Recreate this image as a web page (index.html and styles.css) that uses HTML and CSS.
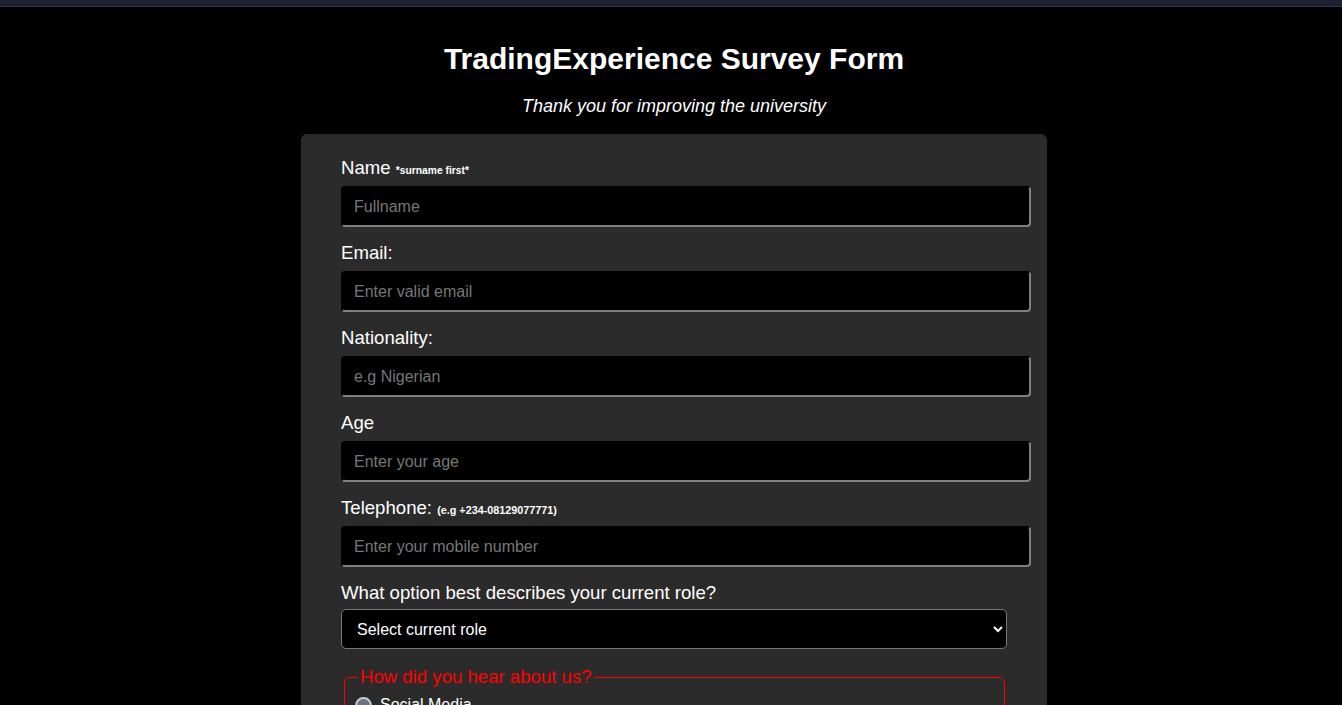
FILE: index.html
```html
<!DOCTYPE html>
<html lang="en">
<head>
<meta charset="utf-8">
<title>TradingExperience Survey Form</title>
<link rel="stylesheet" href="styles.css">
</head>
<body>
<div class="topbar"></div>
<main class="page">
  <h1 class="title">TradingExperience Survey Form</h1>
  <p class="subtitle">Thank you for improving the university</p>
  <form class="card">
    <div class="group">
      <label class="label" for="name">Name <small>*surname first*</small></label>
      <input class="field" id="name" type="text" placeholder="Fullname">
    </div>
    <div class="group">
      <label class="label" for="email">Email:</label>
      <input class="field" id="email" type="email" placeholder="Enter valid email">
    </div>
    <div class="group">
      <label class="label" for="nat">Nationality:</label>
      <input class="field" id="nat" type="text" placeholder="e.g Nigerian">
    </div>
    <div class="group">
      <label class="label" for="age">Age</label>
      <input class="field" id="age" type="number" placeholder="Enter your age">
    </div>
    <div class="group">
      <label class="label" for="tel">Telephone: <small class="small-wide">(e.g +234-08129077771)</small></label>
      <input class="field" id="tel" type="tel" placeholder="Enter your mobile number">
    </div>
    <div class="group">
      <label class="label label-select" for="role">What option best describes your current role?</label>
      <select class="select" id="role">
        <option>Select current role</option>
        <option>Student</option>
        <option>Full time job</option>
      </select>
    </div>
    <fieldset class="fieldset">
      <legend class="legend">How did you hear about us?</legend>
      <label class="radio"><input class="radio-input" type="radio" name="hear"> Social Media</label>
      <label class="radio"><input class="radio-input" type="radio" name="hear"> Friends</label>
    </fieldset>
  </form>
</main>
</body>
</html>
```
FILE: styles.css
```css
html, body {
  margin: 0;
  padding: 0;
  background: #000;
  color: #fff;
  font-family: "Liberation Sans", Arial, sans-serif;
}

.topbar {
  height: 6px;
  background: #1c2131;
  border-bottom: 1px solid #2e3447;
}

.page {
  padding-left: 6px;
  display: flex;
  flex-direction: column;
  align-items: center;
}

.title {
  font-size: 30px;
  font-weight: bold;
  line-height: 36px;
  margin: 34px 0 0;
}

.subtitle {
  font-size: 18px;
  font-style: italic;
  line-height: 21px;
  margin: 19px 0 0;
}

.card {
  box-sizing: border-box;
  width: 746px;
  margin-top: 17px;
  background: #2b2b2b;
  border-radius: 6px;
  padding: 23px 16px 20px 40px;
}

.group {
  margin-bottom: 15px;
}

.label {
  display: block;
  font-size: 18.6px;
  line-height: 21px;
  margin-bottom: 8px;
}

.label small {
  font-size: 10.3px;
  font-weight: bold;
  line-height: 1;
}

.label .small-wide {
  font-size: 10.8px;
}

.label-select {
  margin-bottom: 6px;
}

.field {
  box-sizing: border-box;
  display: block;
  width: 690px;
  height: 41px;
  background: #000;
  color: #fff;
  border: 2px inset #777;
  border-top-color: #1e1e1e;
  border-left-color: #1e1e1e;
  border-right-color: #808080;
  border-bottom-color: #808080;
  border-radius: 4px;
  padding: 0 11px;
  font-family: inherit;
  font-size: 16px;
}

.field::placeholder {
  color: #777;
}

.select {
  box-sizing: border-box;
  display: block;
  width: 666px;
  height: 40px;
  background: #000;
  color: #fff;
  border: 1px solid #777;
  border-radius: 5px;
  padding: 0 11px;
  font-family: inherit;
  font-size: 16px;
}

.fieldset {
  box-sizing: border-box;
  width: 661px;
  margin: 17px 0 0 3px;
  border: 1px solid #ff0000;
  border-radius: 6px;
  padding: 6px 10px 10px;
}

.legend {
  color: #ff0000;
  font-size: 18.6px;
  margin-left: 3px;
  padding: 0 2px;
}

.radio {
  display: flex;
  align-items: center;
  gap: 8px;
  font-size: 16px;
  line-height: 22px;
}

.radio-input {
  appearance: none;
  -webkit-appearance: none;
  box-sizing: border-box;
  width: 17px;
  height: 17px;
  margin: 0;
  border-radius: 50%;
  border: 2px solid #c9ccd2;
  background: #6c7280;
}
```
